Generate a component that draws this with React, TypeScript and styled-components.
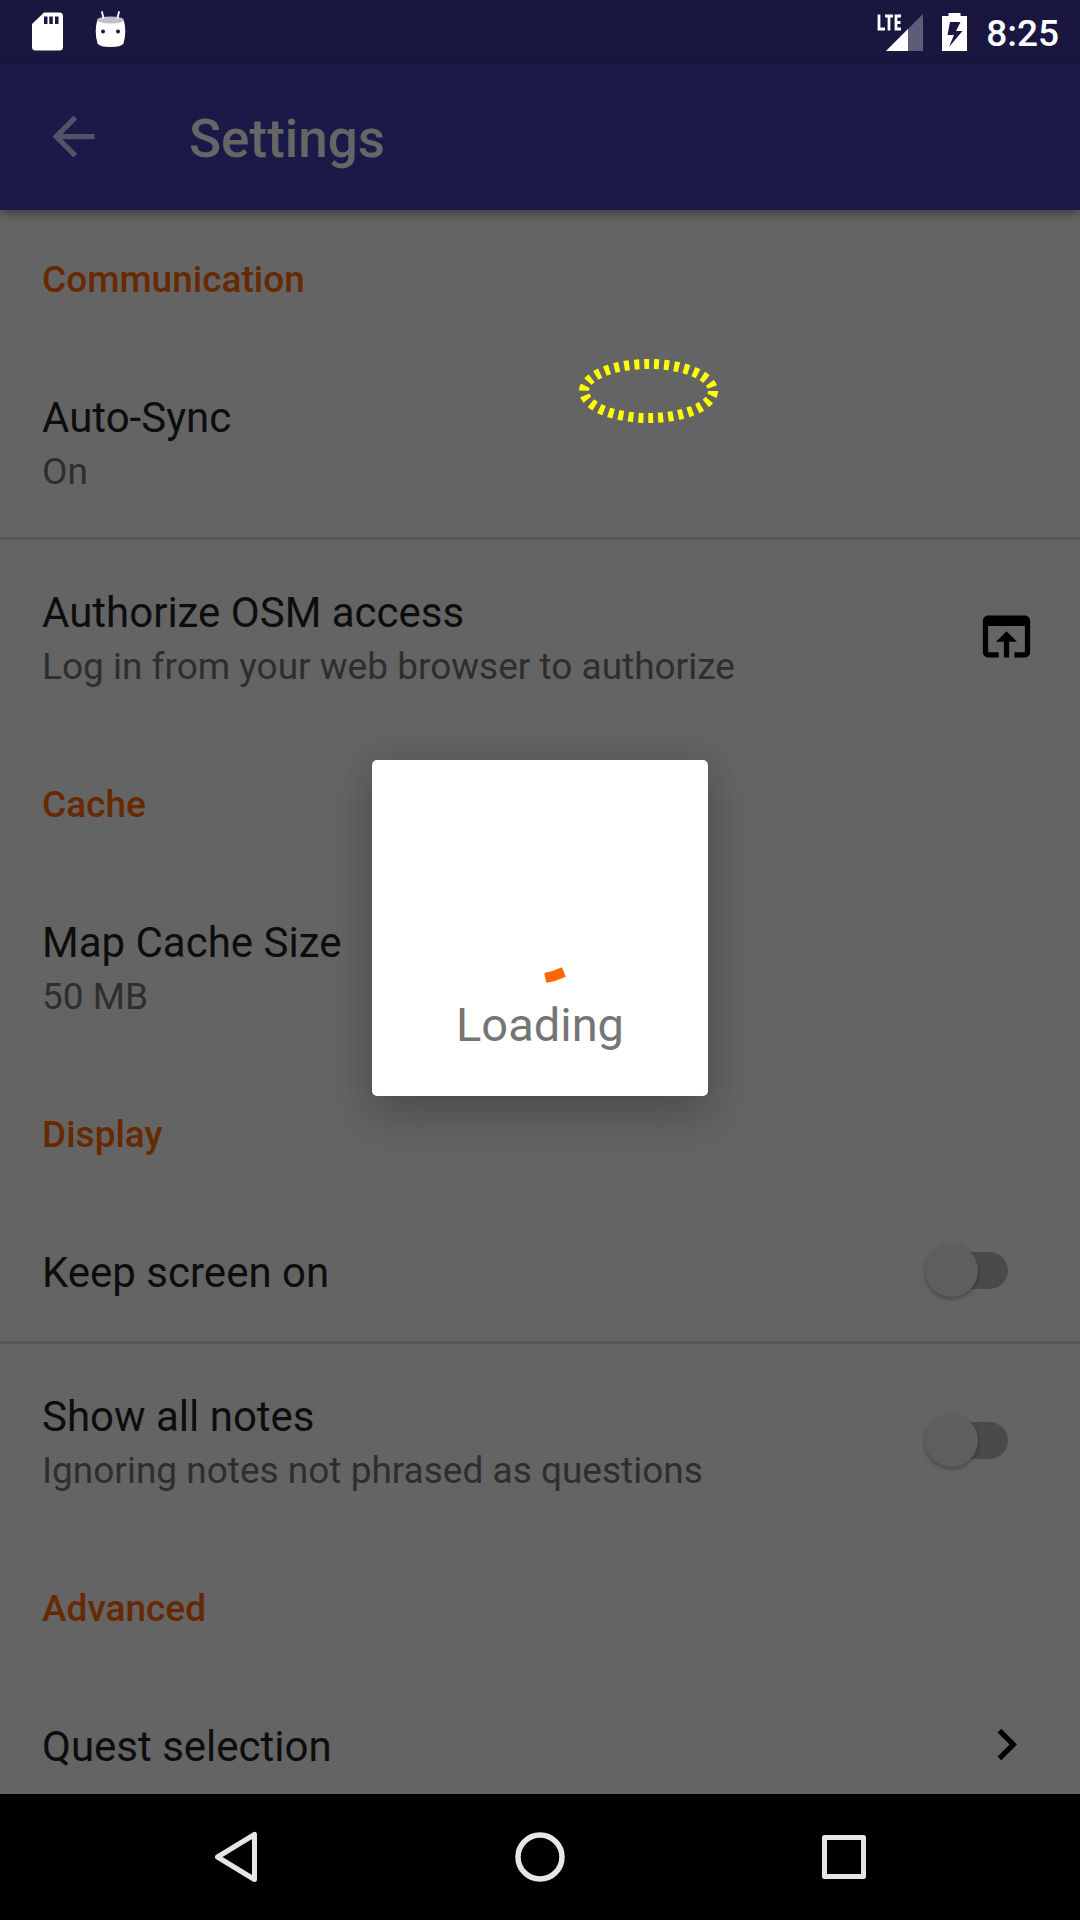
import React from "react";
import styled, { createGlobalStyle } from "styled-components";

const GlobalStyle = createGlobalStyle`
  * { box-sizing: border-box; }
  html, body, #root { height: 100%; margin: 0; }
  body { background: #646464; font-family: Roboto, "Noto Sans", sans-serif; }
`;

const Screen = styled.div`
  position: relative;
  display: flex;
  flex-direction: column;
  height: 100vh;
  overflow: hidden;
`;

const StatusBar = styled.div`
  display: flex;
  flex: none;
  align-items: center;
  justify-content: space-between;
  height: 63px;
  padding: 0 21px 0 32px;
  background: #191740;
  color: #fff;
`;

const StatusGroup = styled.div<{ $gap: number }>`
  display: flex;
  align-items: center;
  gap: ${(p) => p.$gap}px;
`;

const Clock = styled.time`
  padding-top: 3px;
  font-size: 37px;
  line-height: 43px;
  font-weight: 500;
`;

const Toolbar = styled.header`
  position: relative;
  z-index: 1;
  display: flex;
  flex: none;
  align-items: center;
  gap: 84px;
  height: 147px;
  padding: 0 42px;
  background: #1a1948;
  box-shadow: 0 3px 10px rgba(0, 0, 0, 0.4);
`;

const IconButton = styled.button`
  display: grid;
  place-items: center;
  padding: 0;
  border: 0;
  background: none;
  color: inherit;
`;

const BackButton = styled(IconButton)`
  color: #535366;
`;

const RowButton = styled(IconButton)`
  margin: -6px 0;
  color: #000;
`;

const PageTitle = styled.h1`
  margin: 0;
  padding-top: 4px;
  color: #666;
  font-size: 53px;
  line-height: 62px;
  font-weight: 500;
`;

const Content = styled.main`
  position: relative;
  flex: 1;
  min-height: 0;
  overflow: hidden;
  background: #646464;
`;

const SectionTitle = styled.h2`
  margin: 0;
  padding: 48px 42px 44px;
  color: #672900;
  font-size: 37px;
  line-height: 43px;
  font-weight: 500;
`;

const Row = styled.div<{ $divider?: boolean }>`
  display: flex;
  align-items: center;
  justify-content: space-between;
  padding: 40px 42px;
  border-bottom: 3px solid ${(p) => (p.$divider ? "#575757" : "transparent")};
`;

const RowText = styled.div`
  padding-top: 5px;
`;

const RowTitle = styled.div`
  color: #0d0d0d;
  font-size: 42px;
  line-height: 56px;
`;

const Summary = styled.div`
  color: #2e2e2e;
  font-size: 37px;
  line-height: 51px;
`;

const Switch = styled.input`
  appearance: none;
  display: grid;
  align-items: center;
  flex: none;
  width: 83px;
  height: 53px;
  margin: 0 30px 0 0;

  &::before,
  &::after {
    content: "";
    grid-area: 1 / 1;
  }
  &::before {
    height: 37px;
    margin-left: 8px;
    border-radius: 19px;
    background: #4a4a4a;
  }
  &::after {
    width: 53px;
    height: 53px;
    border-radius: 50%;
    background: #5e5e5e;
    box-shadow: 0 2px 4px rgba(0, 0, 0, 0.3);
  }
`;

const FocusMark = styled.svg`
  position: absolute;
  top: 149px;
  left: 579px;
`;

const NavBar = styled.nav`
  display: flex;
  flex: none;
  align-items: center;
  justify-content: center;
  gap: 242px;
  height: 126px;
  background: #000;
  color: #e6e6e6;
`;

const DialogLayer = styled.div`
  position: absolute;
  inset: 63px 0 127px;
  z-index: 2;
  display: grid;
  place-items: center;
`;

const Dialog = styled.div`
  display: flex;
  flex-direction: column;
  align-items: center;
  gap: 14px;
  width: 336px;
  height: 336px;
  padding-top: 113px;
  border-radius: 5px;
  background: #fff;
  box-shadow: 0 20px 48px rgba(0, 0, 0, 0.22), 0 0 32px rgba(0, 0, 0, 0.08);
`;

const DialogText = styled.div`
  color: #757575;
  font-size: 47px;
  line-height: 56px;
`;

function MaterialIcon({ d }: { d: string }) {
  return (
    <svg width="63" height="63" viewBox="0 0 24 24" fill="currentColor" aria-hidden="true">
      <path d={d} />
    </svg>
  );
}

const ARROW_BACK = "M20 11H7.83l5.59-5.59L12 4l-8 8 8 8 1.41-1.41L7.83 13H20v-2z";
const OPEN_IN_BROWSER =
  "M19 4H5c-1.11 0-2 .9-2 2v12c0 1.1.89 2 2 2h4v-2H5V8h14v10h-4v2h4c1.1 0 2-.9 2-2V6c0-1.1-.89-2-2-2zm-7 6l-4 4h3v6h2v-6h3l-4-4z";
const CHEVRON_RIGHT = "M10 6L8.59 7.41 13.17 12l-4.58 4.59L10 18l6-6z";

interface SettingProps {
  title: string;
  summary?: string;
  divider?: boolean;
  children?: React.ReactNode;
}

function Setting({ title, summary, divider, children }: SettingProps) {
  return (
    <Row $divider={divider}>
      <RowText>
        <RowTitle>{title}</RowTitle>
        {summary && <Summary>{summary}</Summary>}
      </RowText>
      {children}
    </Row>
  );
}

function SwitchSetting({ id, title, summary, divider }: SettingProps & { id: string }) {
  return (
    <Row $divider={divider}>
      <RowText as="label" htmlFor={id}>
        <RowTitle>{title}</RowTitle>
        {summary && <Summary>{summary}</Summary>}
      </RowText>
      <Switch id={id} type="checkbox" role="switch" />
    </Row>
  );
}

function SdCardIcon() {
  return (
    <svg width="31" height="39" viewBox="0 0 31 39" aria-hidden="true">
      <path
        fill="#fff"
        fillRule="evenodd"
        d="M12 .5H27.5a3.5 3.5 0 0 1 3.5 3.5V35a3.5 3.5 0 0 1-3.5 3.5H3.5A3.5 3.5 0 0 1 0 35V12zM12 4.5v7.5h3.5V4.5zM17.3 4.5v7.5h3.5V4.5zM23 4.5v7.5h3.5V4.5z"
      />
    </svg>
  );
}

function DebugIcon() {
  return (
    <svg width="31" height="41" viewBox="0 -1 31 41" aria-hidden="true">
      <path d="M2 9Q-.8 20 2.500 31.500Q5 35 15.500 35T28.500 31.500Q31.800 20 29 9z" fill="#fff" />
      <ellipse cx="15.500" cy="8" rx="13.500" ry="3.500" fill="#c0c0cc" />
      <path d="M7 0l1.500 6M24 0l-1.500 6" stroke="#fff" strokeWidth="1.800" strokeLinecap="round" />
      <circle cx="8" cy="19.500" r="2" fill="#191740" />
      <circle cx="23" cy="19.500" r="2" fill="#191740" />
    </svg>
  );
}

function SignalIcon() {
  return (
    <svg width="46" height="38" viewBox="0 0 46 38" aria-label="LTE signal">
      <path d="M46 1V38H9z" fill="#5e5d79" />
      <path d="M31 16V38H9z" fill="#fff" />
      <path d="M2 1.500V16H8M8 3H16M12 3V17.400M24 3H19V16H24M19 9.500H23.500" fill="none" stroke="#fff" strokeWidth="2.800" />
    </svg>
  );
}

function BatteryIcon() {
  return (
    <svg width="25" height="38" viewBox="0 0 25 38" aria-label="Charging">
      <path
        fill="#fff"
        fillRule="evenodd"
        d="M6.500 0h12v3H25v35H0V3h6.500zM8 9L5.500 22h6.500L7 34 20.500 18H14L18.500 9z"
      />
    </svg>
  );
}

export default function App() {
  return (
    <Screen>
      <GlobalStyle />
      <StatusBar>
        <StatusGroup $gap={32}>
          <SdCardIcon />
          <DebugIcon />
        </StatusGroup>
        <StatusGroup $gap={19}>
          <SignalIcon />
          <BatteryIcon />
          <Clock>8:25</Clock>
        </StatusGroup>
      </StatusBar>

      <Toolbar>
        <BackButton type="button" aria-label="Back">
          <MaterialIcon d={ARROW_BACK} />
        </BackButton>
        <PageTitle>Settings</PageTitle>
      </Toolbar>

      <Content>
        <SectionTitle>Communication</SectionTitle>
        <Setting title="Auto-Sync" summary="On" divider />
        <Setting title="Authorize OSM access" summary="Log in from your web browser to authorize">
          <RowButton type="button" aria-label="Open in browser">
            <MaterialIcon d={OPEN_IN_BROWSER} />
          </RowButton>
        </Setting>

        <SectionTitle>Cache</SectionTitle>
        <Setting title="Map Cache Size" summary="50 MB" />

        <SectionTitle>Display</SectionTitle>
        <SwitchSetting id="keep-screen-on" title="Keep screen on" divider />
        <SwitchSetting id="show-notes" title="Show all notes" summary="Ignoring notes not phrased as questions" />

        <SectionTitle>Advanced</SectionTitle>
        <Setting title="Quest selection">
          <RowButton type="button" aria-label="Open quest selection">
            <MaterialIcon d={CHEVRON_RIGHT} />
          </RowButton>
        </Setting>

        <FocusMark width="139" height="64" viewBox="0 0 139 64" aria-hidden="true">
          <ellipse cx="69.500" cy="32" rx="64.500" ry="27" fill="none" stroke="#ff0" strokeWidth="10" strokeDasharray="5 5" />
        </FocusMark>
      </Content>

      <NavBar>
        <IconButton type="button" aria-label="Back">
          <svg width="62" height="62" viewBox="0 0 62 62" fill="none" stroke="currentColor" strokeWidth="5" strokeLinejoin="round">
            <path d="M49.500 8.500V53.500L12.500 31z" />
          </svg>
        </IconButton>
        <IconButton type="button" aria-label="Home">
          <svg width="62" height="62" viewBox="0 0 62 62" fill="none" stroke="currentColor" strokeWidth="5.500">
            <circle cx="31" cy="31" r="22" />
          </svg>
        </IconButton>
        <IconButton type="button" aria-label="Recent apps">
          <svg width="62" height="62" viewBox="0 0 62 62" fill="none" stroke="currentColor" strokeWidth="5" strokeLinejoin="round">
            <rect x="11.500" y="11.500" width="39" height="39" />
          </svg>
        </IconButton>
      </NavBar>

      <DialogLayer>
        <Dialog role="dialog" aria-label="Loading">
          <svg width="110" height="110" viewBox="0 0 110 110" aria-hidden="true">
            <path d="M59.300 100Q68.500 98.300 77 94.300L80.700 103.700Q71.500 108.200 61.300 109.700z" fill="#f60" />
          </svg>
          <DialogText>Loading</DialogText>
        </Dialog>
      </DialogLayer>
    </Screen>
  );
}
